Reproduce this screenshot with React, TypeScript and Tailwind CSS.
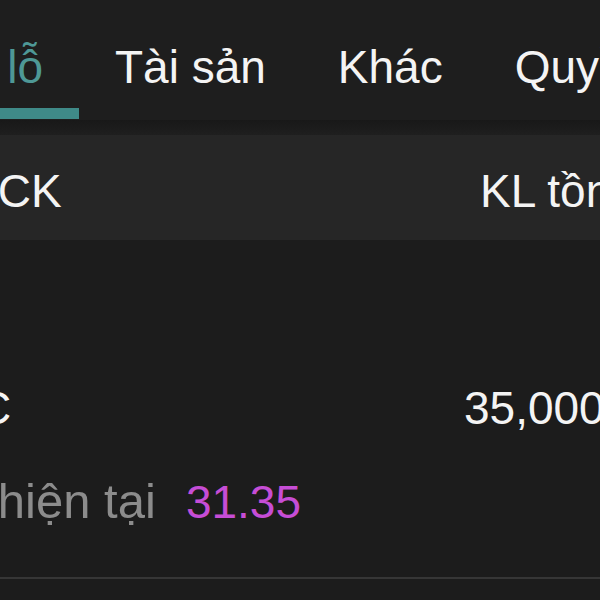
export default function App() {
  const tabs = ["Lãi lỗ", "Tài sản", "Khác", "Quyền"]
  return (
    <div className="h-[600px] w-[600px] overflow-hidden bg-[#1c1c1c] font-['Liberation_Sans',Arial,sans-serif] text-[46px] leading-[46px] text-[#f4f4f4]">
      {/* tab bar */}
      <div className="flex h-[120px] items-start bg-[#1e1e1e] pt-[44px]">
        <div className="-ml-[103px] flex shrink-0 whitespace-nowrap">
          {tabs.map((tab, i) => (
            <div key={tab} className="flex flex-col">
              <span className={i === 0 ? "px-[36px] text-[#4e9896]" : "px-[36px] text-[#f4f4f4]"}>{tab}</span>
              <div className={i === 0 ? "mt-[18px] h-[11px] bg-[#3f8a88]" : "mt-[18px] h-[11px]"} />
            </div>
          ))}
        </div>
      </div>
      <div className="h-[15px] bg-gradient-to-b from-[#181818] to-[#1f1f1f]" />

      {/* header */}
      <div className="flex h-[105px] whitespace-nowrap bg-[#262626] pt-[33px]">
        <div className="w-[480px] shrink-0">
          <span className="-ml-[79px] inline-block">Mã CK</span>
        </div>
        <span className="shrink-0">KL tồn kho</span>
      </div>

      {/* row */}
      <div className="whitespace-nowrap pt-[145px]">
        <div className="flex">
          <div className="w-[464px] shrink-0">
            <span className="-ml-[22px] inline-block">C</span>
          </div>
          <span className="shrink-0">35,000</span>
        </div>
        <div className="mt-[47px] flex items-baseline gap-[30px]">
          <span className="-ml-[92px] shrink-0 text-[49px] text-[#8c8c8c]">Giá hiện tại</span>
          <span className="shrink-0 text-[#c64dd6]">31.35</span>
        </div>
        <div className="mt-[52px] h-[2px] bg-[#363636]" />
      </div>
    </div>
  )
}
